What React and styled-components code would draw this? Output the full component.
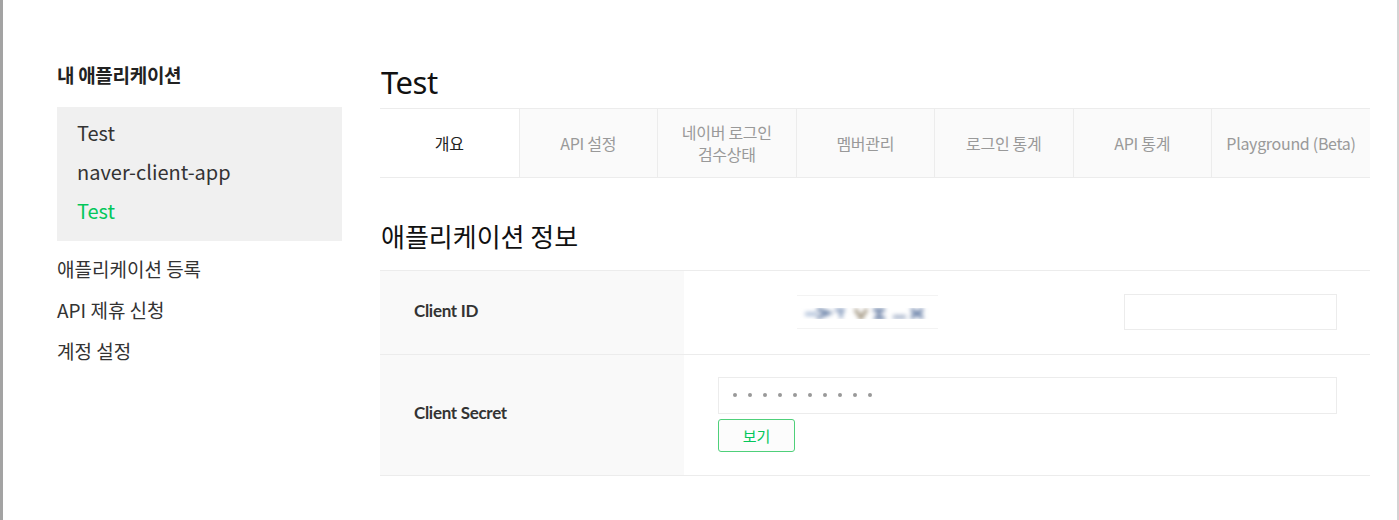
import React from "react";
import styled, { createGlobalStyle } from "styled-components";

const GlobalStyle = createGlobalStyle`
  html, body {
    margin: 0;
    padding: 0;
    background: #fff;
  }
  body {
    font-family: "Noto Sans", "Noto Sans CJK KR", sans-serif;
    color: #333;
  }
`;

const apps = [
  { name: "Test", active: false },
  { name: "naver-client-app", active: false },
  { name: "Test", active: true },
];

const links = ["애플리케이션 등록", "API 제휴 신청", "계정 설정"];

const tabs = [
  ["개요"],
  ["API 설정"],
  ["네이버 로그인", "검수상태"],
  ["멤버관리"],
  ["로그인 통계"],
  ["API 통계"],
  ["Playground (Beta)"],
];

const App = () => {
  return (
    <>
      <GlobalStyle />
      <Page>
        <Sidebar>
          <SideTitle>내 애플리케이션</SideTitle>
          <AppBox>
            {apps.map((a, i) => (
              <AppItem key={i} $active={a.active}>
                {a.name}
              </AppItem>
            ))}
          </AppBox>
          <SideLinks>
            {links.map((l) => (
              <SideLink key={l}>{l}</SideLink>
            ))}
          </SideLinks>
        </Sidebar>
        <Main>
          <Title>Test</Title>
          <TabBar>
            {tabs.map((t, i) => (
              <Tab key={i} $active={i === 0}>
                {t.map((line) => (
                  <TabLine key={line}>{line}</TabLine>
                ))}
              </Tab>
            ))}
          </TabBar>
          <SectionTitle>애플리케이션 정보</SectionTitle>
          <InfoTable>
            <Row $height={84}>
              <Label>Client ID</Label>
              <Value>
                <IdRow>
                  <BlurredId>
                    <svg width="140" height="30" viewBox="0 0 140 30">
                      <defs>
                        <filter id="b">
                          <feGaussianBlur stdDeviation="2" />
                        </filter>
                      </defs>
                      <g filter="url(#b)" strokeWidth="3.5" fill="none">
                        <path d="M8 17h12" stroke="#a6b8d4" />
                        <path d="M20 12l12 4-12 5" stroke="#6f86ab" />
                        <path d="M38 13h10M44 12v9" stroke="#8ea2c2" />
                        <path d="M58 12l6 9 6-9" stroke="#a59a86" />
                        <path d="M76 13h12M82 13v8M77 21h11" stroke="#6e83a8" />
                        <path d="M96 20h13" stroke="#9aa9c3" />
                        <path d="M114 12l12 9M126 12l-12 9" stroke="#7288ad" />
                      </g>
                    </svg>
                  </BlurredId>
                  <IdInput />
                </IdRow>
              </Value>
            </Row>
            <Row $height={121}>
              <Label>Client Secret</Label>
              <Value>
                <SecretBox>
                  <SecretInput>
                    {Array.from({ length: 10 }).map((_, i) => (
                      <Dot key={i} />
                    ))}
                  </SecretInput>
                  <ShowButton>보기</ShowButton>
                </SecretBox>
              </Value>
            </Row>
          </InfoTable>
        </Main>
      </Page>
    </>
  );
};

const Page = styled.div`
  display: flex;
  height: 520px;
  box-sizing: border-box;
  border-left: 3px solid #a3a3a3;
  border-right: 2px solid #d4d4d4;
  padding: 0 27px 0 54px;
  gap: 38px;
`;

const Sidebar = styled.aside`
  width: 285px;
  flex-shrink: 0;
  padding-top: 62px;
`;

const SideTitle = styled.h2`
  margin: 0;
  font-family: "Noto Sans CJK KR", sans-serif;
  font-size: 19px;
  font-weight: 700;
  color: #222;
  line-height: 26px;
  letter-spacing: -0.3px;
`;

const AppBox = styled.ul`
  list-style: none;
  margin: 19px 0 0;
  padding: 6px 20px 11px;
  background: #f0f0f0;
`;

const AppItem = styled.li`
  font-family: "Noto Sans CJK KR", sans-serif;
  font-size: 20px;
  line-height: 39px;
  color: ${(p) => (p.$active ? "#03c75a" : "#333")};
`;

const SideLinks = styled.ul`
  list-style: none;
  margin: 7px 0 0;
  padding: 0;
`;

const SideLink = styled.li`
  font-family: "Noto Sans CJK KR", sans-serif;
  font-size: 19px;
  line-height: 41px;
  color: #333;
`;

const Main = styled.main`
  flex: 1;
  padding-top: 60px;
`;

const Title = styled.h1`
  margin: 0 0 0 1px;
  font-family: "Noto Sans", sans-serif;
  font-weight: 400;
  font-size: 31px;
  line-height: 44px;
  color: #111;
  letter-spacing: -0.5px;
  height: 48px;
`;

const TabBar = styled.ul`
  list-style: none;
  margin: 0;
  padding: 0;
  display: grid;
  grid-template-columns: repeat(6, 138.5px) 1fr;
  border-top: 1px solid #ececec;
  border-bottom: 1px solid #ececec;
  height: 70px;
  box-sizing: border-box;
`;

const Tab = styled.li`
  display: flex;
  flex-direction: column;
  align-items: center;
  justify-content: center;
  font-family: "Noto Sans CJK KR", sans-serif;
  font-size: 16px;
  letter-spacing: -0.3px;
  color: ${(p) => (p.$active ? "#222" : "#999")};
  background: ${(p) => (p.$active ? "#fff" : "#fafafa")};
  border-left: ${(p) => (p.$active ? "none" : "1px solid #ececec")};
  white-space: nowrap;
`;

const TabLine = styled.span`
  display: block;
  line-height: 22px;
  height: 22px;
`;

const SectionTitle = styled.h2`
  margin: 36px 0 0 1px;
  font-family: "Noto Sans CJK KR", sans-serif;
  font-weight: 400;
  font-size: 26px;
  line-height: 44px;
  color: #111;
  height: 56px;
`;

const InfoTable = styled.div`
  border-top: 1px solid #ececec;
`;

const Row = styled.div`
  display: grid;
  grid-template-columns: 304px 1fr;
  height: ${(p) => p.$height}px;
  box-sizing: border-box;
  border-bottom: 1px solid #ececec;
`;

const Label = styled.div`
  background: #f9f9f9;
  display: flex;
  align-items: center;
  padding: 0 0 5px 34px;
  font-family: "Lato", "Noto Sans CJK KR", sans-serif;
  font-size: 17px;
  font-weight: 700;
  color: #333;
  letter-spacing: -0.3px;
`;

const Value = styled.div`
  display: flex;
  align-items: center;
  padding: 0 33px 0 34px;
`;

const IdRow = styled.div`
  display: flex;
  align-items: center;
  width: 100%;
  margin-top: -2px;
`;

const BlurredId = styled.div`
  margin-left: 79px;
  width: 141px;
  height: 32px;
  border-top: 1px solid #f3f3f3;
  border-bottom: 1px solid #f3f3f3;
  display: flex;
  align-items: center;
`;

const IdInput = styled.div`
  margin-left: auto;
  width: 213px;
  height: 36px;
  border: 1px solid #ececec;
  box-sizing: border-box;
`;

const SecretBox = styled.div`
  width: 100%;
  display: flex;
  flex-direction: column;
  align-items: flex-start;
  gap: 5px;
  margin-top: -2px;
`;

const SecretInput = styled.div`
  width: 100%;
  height: 37px;
  box-sizing: border-box;
  border: 1px solid #ececec;
  display: flex;
  align-items: center;
  gap: 11px;
  padding-left: 14px;
`;

const Dot = styled.span`
  width: 4px;
  height: 4px;
  border-radius: 50%;
  background: #999;
`;

const ShowButton = styled.button`
  width: 77px;
  height: 33px;
  border: 1px solid #4fd07a;
  border-radius: 3px;
  background: #fcfcfc;
  color: #03c75a;
  font-family: "Noto Sans CJK KR", sans-serif;
  font-size: 15px;
  padding: 0;
`;

export default App;
